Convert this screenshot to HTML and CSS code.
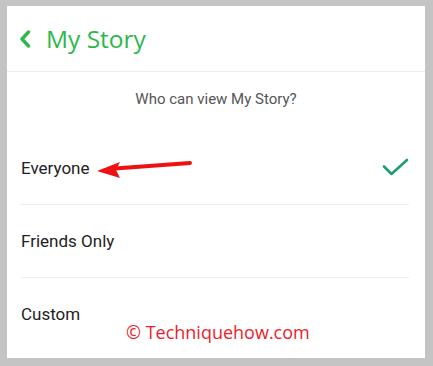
FILE: index.html
```html
<!DOCTYPE html>
<html lang="en">
<head>
    <meta charset="UTF-8">
    <title>My Story</title>
    <link rel="stylesheet" href="styles.css">
</head>
<body>
    <div class="frame">
        <header class="top-bar">
            <svg class="back" width="12" height="18" viewBox="0 0 12 18">
                <path d="M9.5 2 L3 9 L9.5 16" fill="none" stroke="#2db84d" stroke-width="3.4" stroke-linecap="round" stroke-linejoin="round"/>
            </svg>
            <h1>My Story</h1>
        </header>

        <div class="question">Who can view My Story?</div>

        <ul class="options">
            <li class="option">
                <span>Everyone</span>
                <svg class="check" width="27" height="18" viewBox="0 0 27 18">
                    <path d="M2 8.5 L9.5 16 L25 2" fill="none" stroke="#1f9c72" stroke-width="2.6" stroke-linecap="round" stroke-linejoin="round"/>
                </svg>
            </li>
            <li class="option"><span>Friends Only</span></li>
            <li class="option"><span>Custom</span></li>
        </ul>

        <!-- annotation laid over the screenshot -->
        <svg class="pointer" width="100" height="22" viewBox="0 0 100 22">
            <path d="M95 5 L20 10.5" stroke="#ee1111" stroke-width="4" stroke-linecap="round"/>
            <path d="M2 13 L25 4 L21 12 L25 20 Z" fill="#ee1111"/>
        </svg>
        <div class="watermark">© Techniquehow.com</div>
    </div>
</body>
</html>
```

FILE: styles.css
```css
body {
    margin: 0;
    background-color: #c4c4c4;
    font-family: Roboto, "Liberation Sans", sans-serif;
}

.frame {
    position: relative;
    margin: 6px 8px 0 7px;
    height: 352px;
    background-color: #fff;
    overflow: hidden;
}

.top-bar {
    display: flex;
    align-items: center;
    gap: 15px;
    height: 65px;
    padding-left: 12px;
    border-bottom: 1px solid #ececec;
}

.top-bar h1 {
    margin: 0;
    font-family: "Open Sans", sans-serif;
    font-size: 24.5px;
    font-weight: 400;
    color: #2db84d;
    padding-bottom: 1px;
}

.back {
    display: block;
    margin-top: 1px;
}

.question {
    text-align: center;
    font-size: 15px;
    color: #555;
    padding-top: 18px;
    height: 42px;
}

.options {
    list-style: none;
    margin: 0;
    padding: 0 16px 0 14px;
}

.option {
    display: flex;
    align-items: center;
    justify-content: space-between;
    height: 72px;
    border-bottom: 1px solid #eeeeee;
    font-size: 17px;
    color: #222;
}

.option:last-child {
    border-bottom: none;
}

.check {
    display: block;
    margin-bottom: 2px;
}

.pointer {
    position: absolute;
    left: 88px;
    top: 152px;
}

.watermark {
    position: absolute;
    left: 119px;
    top: 314px;
    font-family: "Open Sans", sans-serif;
    font-size: 18px;
    color: #ec1c2c;
}
```
